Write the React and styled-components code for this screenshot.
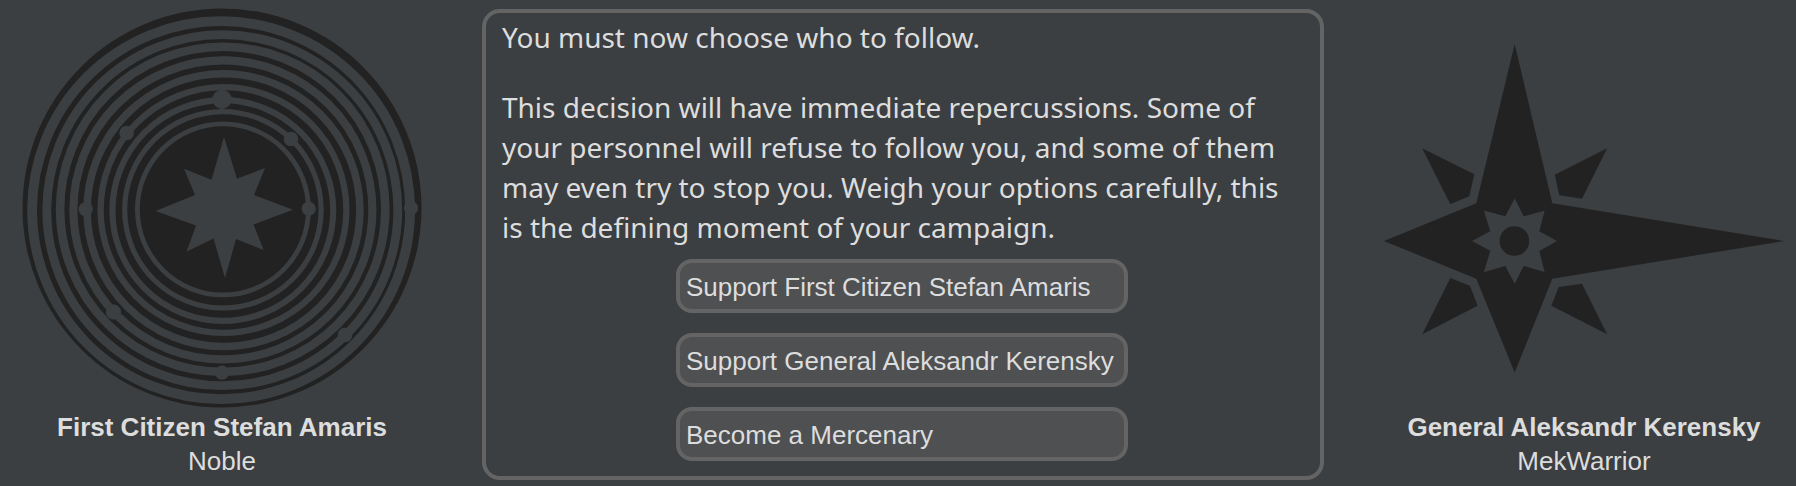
import React from 'react';
import styled, { createGlobalStyle } from 'styled-components';

const INK = '#222222';
const GROUND = '#3c3f41';
const LINE = '#646464';

const GlobalStyle = createGlobalStyle`
  *, *::before, *::after { box-sizing: border-box; }
  body {
    margin: 0;
    background: ${GROUND};
    color: #dddddd;
    font-family: "Liberation Sans", Arial, sans-serif;
    font-size: 26px;
  }
`;

const Dialog = styled.main`
  display: flex;
  align-items: flex-start;
  gap: 60px;
  padding: 8px 12px 6px 22px;
`;

const Leader = styled.figure`
  flex: 0 0 400px;
  margin: 0;
  display: flex;
  flex-direction: column;
  align-items: center;
  gap: 2px;
`;

const Emblem = styled.svg`
  display: block;
  width: 100%;
  height: auto;
`;

const Caption = styled.figcaption`
  display: flex;
  flex-direction: column;
  align-items: center;
  line-height: 34px;
  white-space: nowrap;
`;

const Name = styled.strong`
  font-weight: 700;
`;

const Role = styled.span`
  font-weight: 400;
`;

const Panel = styled.section`
  flex: 1 1 0;
  min-width: 0;
  display: flex;
  flex-direction: column;
  margin-top: 1px;
  padding: 4px 32px 15px 16px;
  border: 4px solid ${LINE};
  border-radius: 18px;
`;

const Message = styled.div`
  display: flex;
  flex-direction: column;
  gap: 30px;
  font-family: "Noto Sans", sans-serif;
  font-size: 28px;
  line-height: 40px;
`;

const Paragraph = styled.p`
  margin: 0;
`;

const Choices = styled.div`
  display: flex;
  flex-direction: column;
  align-self: center;
  gap: 20px;
  width: 452px;
  margin: 12px 0 0 14px;
`;

const Choice = styled.button`
  height: 54px;
  padding: 2px 6px 0;
  border: 4px solid ${LINE};
  border-radius: 16px;
  background: #4e5052;
  color: inherit;
  font: inherit;
  text-align: left;
  white-space: nowrap;
  cursor: pointer;
`;

// cx, cy, radius, stroke width
const rings = [
  [199.1, 202.2, 189, 9.8],
  [200.3, 202.2, 175.5, 8.8],
  [200.7, 201.3, 162.6, 8.6],
  [200.9, 201.9, 149.5, 8.1],
  [201.5, 202.2, 136.4, 7.5],
  [201.5, 202, 122.9, 6.3],
  [200.8, 202.5, 110.4, 6.1],
  [200.9, 201.8, 98.2, 5.2],
  [200.9, 201.4, 85.5, 4.8],
];

// cx, cy, radius
const planets = [
  [200, 91.3, 9.6],
  [104.7, 125, 7.3],
  [269, 131, 7.3],
  [63.7, 201.3, 7.1],
  [286.7, 200.7, 7.1],
  [389, 200, 7.1],
  [91.5, 304, 7.6],
  [323, 327, 7.3],
  [200, 364.7, 7.1],
];

function OrbitEmblem() {
  return (
    <Emblem viewBox="0 0 400 400" aria-hidden="true">
      <circle cx="200" cy="200" r="199.5" fill={INK} />
      {rings.map(([cx, cy, r, w]) => (
        <circle key={r} cx={cx} cy={cy} r={r} fill="none" stroke={GROUND} strokeWidth={w} />
      ))}
      {planets.map(([cx, cy, r]) => (
        <circle key={`${cx}-${cy}`} cx={cx} cy={cy} r={r} fill={GROUND} />
      ))}
      <polygon
        fill={GROUND}
        points="202,129 215,170.7 243,160 232,187 271,201.7 231.5,216.5 241.7,242 214,231 203,270 191.5,230.5 164.5,243.7 174,217.5 133.5,203 173,187 162,160.7 189.5,171.7"
      />
    </Emblem>
  );
}

function StarEmblem() {
  return (
    <Emblem viewBox="0 0 400 400" aria-hidden="true">
      <g fill={INK}>
        <polygon points="130.7,36 168.3,195.3 400,233 168.3,270.7 130.7,364.5 92.3,270.7 0,233 92.3,195.3" />
        <polygon points="38.2,140.2 90.3,166.3 85.3,188.3 66.3,196.3" />
        <polygon points="223.2,140.2 170.7,166.7 175.3,187.3 198,190.7" />
        <polygon points="38.2,326.2 66.3,270 86,277.7 93.7,297.7" />
        <polygon points="223.2,326.2 198,275.7 174.7,279 167.3,297.7" />
      </g>
      <polygon
        fill={GROUND}
        points="130.7,190.5 139.7,208.3 160.6,202.7 155.3,223.3 173,233 155.3,243 160.6,264 139.7,258 130.7,275.8 121.3,258 99.8,264.2 106.3,242.7 88,233 106.3,223.3 99.8,202.4 121.3,208.3"
      />
      <circle cx="130.4" cy="233" r="14.8" fill={INK} />
    </Emblem>
  );
}

export default function App() {
  return (
    <>
      <GlobalStyle />
      <Dialog>
        <Leader>
          <OrbitEmblem />
          <Caption>
            <Name>First Citizen Stefan Amaris</Name>
            <Role>Noble</Role>
          </Caption>
        </Leader>
        <Panel>
          <Message>
            <Paragraph>You must now choose who to follow.</Paragraph>
            <Paragraph>
              This decision will have immediate repercussions. Some of your personnel will refuse
              to follow you, and some of them may even try to stop you. Weigh your options
              carefully, this is the defining moment of your campaign.
            </Paragraph>
          </Message>
          <Choices>
            <Choice type="button">Support First Citizen Stefan Amaris</Choice>
            <Choice type="button">Support General Aleksandr Kerensky</Choice>
            <Choice type="button">Become a Mercenary</Choice>
          </Choices>
        </Panel>
        <Leader>
          <StarEmblem />
          <Caption>
            <Name>General Aleksandr Kerensky</Name>
            <Role>MekWarrior</Role>
          </Caption>
        </Leader>
      </Dialog>
    </>
  );
}
